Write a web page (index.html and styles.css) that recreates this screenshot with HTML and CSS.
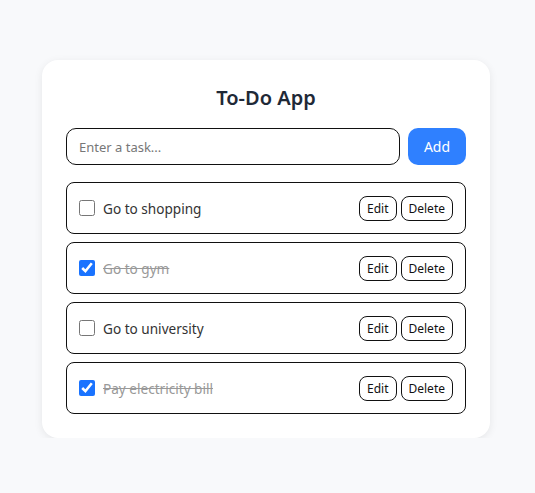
FILE: index.html
```html
<!DOCTYPE html>
<html lang="en">
<head>
<meta charset="utf-8">
<title>To-Do App</title>
<link rel="stylesheet" href="styles.css">
</head>
<body>
<main class="card">
  <h1 class="title">To-Do App</h1>
  <div class="add-row">
    <input class="task-input" type="text" placeholder="Enter a task...">
    <button class="add-btn">Add</button>
  </div>
  <ul class="list">
    <li class="item">
      <label class="item-left"><input type="checkbox" class="check"><span class="text">Go to shopping</span></label>
      <div class="actions"><button class="btn">Edit</button><button class="btn">Delete</button></div>
    </li>
    <li class="item done">
      <label class="item-left"><input type="checkbox" class="check" checked><span class="text">Go to gym</span></label>
      <div class="actions"><button class="btn">Edit</button><button class="btn">Delete</button></div>
    </li>
    <li class="item">
      <label class="item-left"><input type="checkbox" class="check"><span class="text">Go to university</span></label>
      <div class="actions"><button class="btn">Edit</button><button class="btn">Delete</button></div>
    </li>
    <li class="item done">
      <label class="item-left"><input type="checkbox" class="check" checked><span class="text">Pay electricity bill</span></label>
      <div class="actions"><button class="btn">Edit</button><button class="btn">Delete</button></div>
    </li>
  </ul>
</main>
</body>
</html>
```
FILE: styles.css
```css
* { box-sizing: border-box; }
html, body { margin: 0; }
body {
  background: #f8f9fb;
  font-family: "Noto Sans", "Open Sans", sans-serif;
  padding: 60px 0 0 42px;
}
.card {
  width: 448px;
  background: #fff;
  border-radius: 16px;
  box-shadow: 0 2px 8px rgba(0,0,0,0.08);
  padding: 24px;
}
.title {
  margin: 2px 0 18px;
  text-align: center;
  font-size: 20px;
  line-height: 24px;
  font-weight: 600;
  color: #1f2937;
}
.add-row {
  display: flex;
  gap: 8px;
  margin-bottom: 17px;
}
.task-input {
  flex: 1;
  height: 37px;
  border: 1.5px solid #111;
  border-radius: 10px;
  padding: 0 12px;
  font: inherit;
  font-size: 13px;
  color: #333;
}
.task-input::placeholder { color: #777; }
.add-btn {
  width: 58px;
  height: 37px;
  border: none;
  border-radius: 10px;
  background: #2f80ff;
  color: #fff;
  font: inherit;
  font-size: 14px;
}
.list {
  list-style: none;
  margin: 0;
  padding: 0;
  display: flex;
  flex-direction: column;
  gap: 8px;
}
.item {
  height: 52px;
  border: 1px solid #111;
  border-radius: 8px;
  display: flex;
  align-items: center;
  justify-content: space-between;
  padding: 0 12px;
}
.item-left {
  display: flex;
  align-items: center;
  gap: 8px;
}
.check {
  width: 16px;
  height: 16px;
  margin: 0;
  accent-color: #1a73ff;
}
.text {
  font-size: 13.6px;
  color: #333;
}
.done .text {
  color: #999;
  text-decoration: line-through;
}
.actions {
  display: flex;
  gap: 4px;
}
.btn {
  height: 25px;
  border: 1px solid #111;
  border-radius: 8px;
  background: #fff;
  font: inherit;
  font-size: 12px;
  color: #111;
  padding: 0 7px;
}
```
